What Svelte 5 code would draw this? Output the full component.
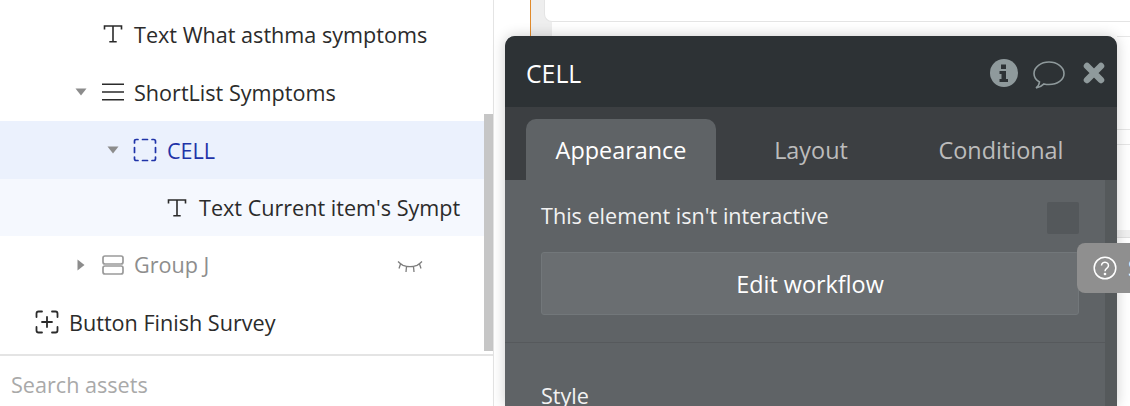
<script>
  const rows = [
    { id: 'text1', label: 'Text What asthma symptoms', depth: 2, icon: 'text' },
    { id: 'list', label: 'ShortList Symptoms', depth: 2, icon: 'list', caret: 'down' },
    { id: 'cell', label: 'CELL', depth: 3, icon: 'cell', caret: 'down', state: 'selected' },
    { id: 'text2', label: "Text Current item's Sympt", depth: 4, icon: 'text', state: 'child' },
    { id: 'group', label: 'Group J', depth: 2, icon: 'group', caret: 'right', state: 'hidden' },
    { id: 'button', label: 'Button Finish Survey', depth: 0, icon: 'button' }
  ];
</script>

<div class="page">
  <aside class="tree">
    <div class="rows">
      {#each rows as row}
        <div class="row {row.state ?? ''} depth{row.depth}">
          <span class="caret">
            {#if row.caret === 'down'}
              <svg width="12" height="8" viewBox="0 0 12 8"><path d="M.5.5h11L6 7.5z" fill="#8c8c8c" /></svg>
            {:else if row.caret === 'right'}
              <svg width="8" height="12" viewBox="0 0 8 12"><path d="M.5.5v11L7.5 6z" fill="#8c8c8c" /></svg>
            {/if}
          </span>
          <span class="icon">
            {#if row.icon === 'text'}
              <svg width="22" height="22" viewBox="0 0 22 22" fill="none" stroke="currentColor" stroke-width="1.6"><path d="M2.500 6.500V3h17v3.500M11 3v15.500M7.300 18.700h7.400" /></svg>
            {:else if row.icon === 'list'}
              <svg width="22" height="22" viewBox="0 0 22 22" fill="none" stroke="currentColor" stroke-width="1.6"><path d="M0 3.200h22M0 11h22M0 18.800h22" /></svg>
            {:else if row.icon === 'cell'}
              <svg width="24" height="24" viewBox="0 0 24 24" fill="none" stroke="currentColor" stroke-width="1.7" stroke-linecap="round"><path d="M1.500 5V3.200Q1.500 1.500 3.200 1.500H5M9.500 1.500h5M19 1.500h1.800q1.700 0 1.700 1.700V5M22.500 9.500v5M22.500 19v1.800q0 1.700-1.700 1.700H19M14.500 22.500h-5M5 22.500H3.200q-1.700 0-1.700-1.700V19M1.500 14.500v-5" /></svg>
            {:else if row.icon === 'group'}
              <svg width="22" height="20" viewBox="0 0 22 20" fill="none" stroke="currentColor" stroke-width="1.700"><rect x="1" y="1" width="20" height="8" rx="2" /><rect x="1" y="11" width="20" height="8" rx="2" /></svg>
            {:else}
              <svg width="24" height="24" viewBox="0 0 24 24" fill="none" stroke="currentColor" stroke-width="1.800" stroke-linecap="round"><path d="M1.500 7V3.500q0-2 2-2H7M17 1.500h3.500q2 0 2 2V7M22.500 17v3.500q0 2-2 2H17M7 22.500H3.500q-2 0-2-2V17M12 7v10M7 12h10" /></svg>
            {/if}
          </span>
          <span class="label">{row.label}</span>
          {#if row.state === 'hidden'}
            <svg class="eye" width="26" height="14" viewBox="0 0 26 14" fill="none" stroke="#7d7d7d" stroke-width="1.300"><path d="M1 1.500Q3.500 4 6 5.300q7 2.600 14 0Q22.500 4 25 1.500M3.500 4 2 8.500M9.500 6.500 9 12M16.500 6.500 17 12M22.500 4 24 8.500" /></svg>
          {/if}
        </div>
      {/each}
      <div class="scrollbar"></div>
    </div>
    <div class="search">Search assets</div>
  </aside>

  <main class="canvas">
    <div class="strip">
      <div class="gutter"></div>
      <div class="card"></div>
    </div>

    <div class="peek">
      <i class="line a"></i>
      <i class="line b"></i>
      <i class="line c"></i>
      <i class="line d"></i>
    </div>

    <section class="editor">
      <header class="title">
        <span>CELL</span>
        <div class="tools">
          <svg width="28" height="28" viewBox="0 0 28 28"><circle cx="14" cy="14" r="14" fill="#8f9a9c" /><path d="M11 5.500h5v4.500h-5zM9.500 12h6.500v8h2v3H9.500v-3h2v-5h-2z" fill="#2d3235" /></svg>
          <svg class="bubble" width="32" height="28" viewBox="0 0 32 28" fill="none" stroke="#8f9a9c" stroke-width="1.600"><path d="M3 27q3-2 3.500-6C3 19 1 16 1 12.500 1 6 8 1 16 1s15 5 15 11.500S24.500 23.500 16 23.500q-2.800 0-5-.6Q8 26 3 27z" /></svg>
          <svg width="22" height="22" viewBox="0 0 22 22" fill="none" stroke="#8f9a9c" stroke-width="6.500" stroke-linecap="round"><path d="M4 4l14 14M18 4 4 18" /></svg>
        </div>
      </header>
      <nav class="tabs">
        <span class="tab active">Appearance</span>
        <span class="tab">Layout</span>
        <span class="tab">Conditional</span>
      </nav>
      <div class="body">
        <div class="content">
          <div class="notice">
            <span>This element isn't interactive</span>
            <span class="check"></span>
          </div>
          <button class="workflow">Edit workflow</button>
          <hr />
          <div class="style">Style</div>
        </div>
        <div class="rail"></div>
      </div>
    </section>

    <div class="help">
      <svg width="24" height="24" viewBox="0 0 24 24" fill="none" stroke="#fff" stroke-width="1.500"><circle cx="12" cy="12" r="10.800" /><path d="M8.500 9.500a3.500 3.300 0 1 1 5.500 2.700q-2 1.300-2 3" /><circle cx="12" cy="18" r=".6" fill="#fff" /></svg>
      <span>Support</span>
    </div>
  </main>
</div>

<style>
  :global(body) {
    margin: 0;
    background: #fff;
  }

  .page {
    display: flex;
    width: 1130px;
    height: 406px;
    overflow: hidden;
    font-family: "Open Sans", sans-serif;
  }

  .tree {
    flex: 0 0 494px;
    display: flex;
    flex-direction: column;
    box-sizing: border-box;
    border-right: 1px solid #e4e4e4;
    background: #fff;
  }

  .rows {
    position: relative;
    padding-top: 5px;
    height: 354px;
    box-sizing: border-box;
    flex: none;
  }

  .row {
    display: flex;
    align-items: center;
    height: 58px;
    box-sizing: border-box;
    color: #2b2b2b;
    font-size: 21.600px;
    white-space: nowrap;
  }

  .depth0 { padding-left: 35px; }
  .depth2 { padding-left: 74px; }
  .depth3 { padding-left: 106px; }
  .depth4 { padding-left: 138px; }

  .caret {
    flex: 0 0 14px;
    width: 14px;
    height: 14px;
    display: flex;
    align-items: center;
    justify-content: center;
    margin-right: 13px;
  }

  .depth0 .caret { display: none; }

  .icon {
    flex: 0 0 24px;
    display: flex;
    align-items: center;
    justify-content: center;
    margin-right: 9px;
  }

  .depth0 .icon { margin-right: 10px; }
  .depth3 .icon, .depth4 .icon { margin-right: 10px; }

  .selected {
    background: #ebf1fd;
    color: #1f33a8;
  }

  .child {
    background: #f5f8fe;
    height: 57px;
  }

  .hidden {
    color: #8d8d8d;
    height: 57px;
  }

  .hidden .icon { color: #9a9a9a; }

  .eye {
    margin: 5px 70px 0 auto;
  }

  .scrollbar {
    position: absolute;
    right: 0;
    top: 114px;
    width: 9px;
    height: 237px;
    background: #c6c6c6;
  }

  .search {
    border-top: 2px solid #e4e4e4;
    flex: 1;
    padding: 15px 0 0 11px;
    color: #a9a9a9;
    font-size: 21.600px;
    line-height: 27px;
  }

  .canvas {
    position: relative;
    flex: 1;
    min-width: 0;
    background: #fff;
  }

  .strip {
    display: flex;
    height: 36px;
    margin-left: 36px;
  }

  .gutter {
    width: 21px;
    height: 36px;
    flex: none;
    background: #eeeeee;
    border-left: 1px solid #e08a2c;
    margin-right: -8px;
  }

  .card {
    flex: 1;
    height: 22px;
    box-sizing: border-box;
    background: #fff;
    border: 1px solid #e4e4e4;
    border-top: 0;
    border-right: 0;
    border-bottom-left-radius: 8px;
  }

  .peek {
    position: absolute;
    inset: 0;
  }

  .line {
    position: absolute;
    right: 0;
    width: 13px;
    height: 1px;
    background: #e6e6e6;
  }

  .a { top: 36px; }
  .b { top: 129px; }
  .c { top: 144px; }
  .d { top: 230px; height: 7px; background: #f0f0f0; border-bottom: 1px solid #e0e0e0; }

  .editor {
    position: absolute;
    left: 11px;
    top: 36px;
    width: 612px;
    height: 370px;
    display: flex;
    flex-direction: column;
    border-radius: 10px 10px 0 0;
    background: #5f6366;
    box-shadow: 0 0 14px rgba(0, 0, 0, 0.2);
    overflow: hidden;
    clip-path: inset(-14px -14px 0 -14px);
  }

  .title {
    flex: 0 0 71px;
    box-sizing: border-box;
    display: flex;
    align-items: center;
    justify-content: space-between;
    padding: 3px 12px 0 21px;
    background: #2d3235;
    color: #fff;
    font-size: 24.800px;
  }

  .tools {
    display: flex;
    align-items: center;
  }

  .bubble {
    margin: 3px 18px 0 15px;
  }

  .tabs {
    flex: 0 0 73px;
    box-sizing: border-box;
    display: flex;
    align-items: flex-end;
    padding-left: 21px;
    background: #3c3f42;
    color: #bcbcbc;
    font-size: 23.400px;
  }

  .tab {
    width: 190px;
    height: 61px;
    display: flex;
    align-items: center;
    justify-content: center;
  }

  .active {
    background: #5f6366;
    color: #fff;
    border-radius: 10px 10px 0 0;
  }

  .body {
    flex: 1;
    display: flex;
    min-height: 0;
  }

  .content {
    flex: 1;
    min-width: 0;
    padding-top: 22px;
    color: #fff;
  }

  .rail {
    flex: 0 0 12px;
    background: #55595b;
  }

  .notice {
    display: flex;
    align-items: flex-start;
    justify-content: space-between;
    height: 32px;
    margin: 0 26px 0 36px;
    font-size: 21.600px;
    line-height: 28px;
    color: #f2f2f2;
  }

  .check {
    width: 32px;
    height: 32px;
    border-radius: 2px;
    background: #54585b;
  }

  .workflow {
    display: block;
    box-sizing: border-box;
    width: 538px;
    height: 63px;
    margin: 18px 0 0 36px;
    padding: 0;
    border: 1px solid #72777a;
    border-radius: 3px;
    background: #6a6e71;
    color: #fff;
    font: inherit;
    font-size: 23.400px;
  }

  hr {
    height: 1px;
    margin: 27px 0 0;
    border: 0;
    background: #56595c;
  }

  .style {
    margin: 38px 0 0 36px;
    font-size: 21.600px;
    line-height: 30px;
    color: #f2f2f2;
  }

  .help {
    position: absolute;
    left: 583px;
    top: 243px;
    width: 100px;
    height: 50px;
    display: flex;
    align-items: center;
    gap: 11px;
    padding-left: 16px;
    box-sizing: border-box;
    border-radius: 8px 0 0 8px;
    background: #8f8f8f;
    color: #fff;
    font-size: 21px;
  }

  .help svg {
    flex: none;
  }
</style>
